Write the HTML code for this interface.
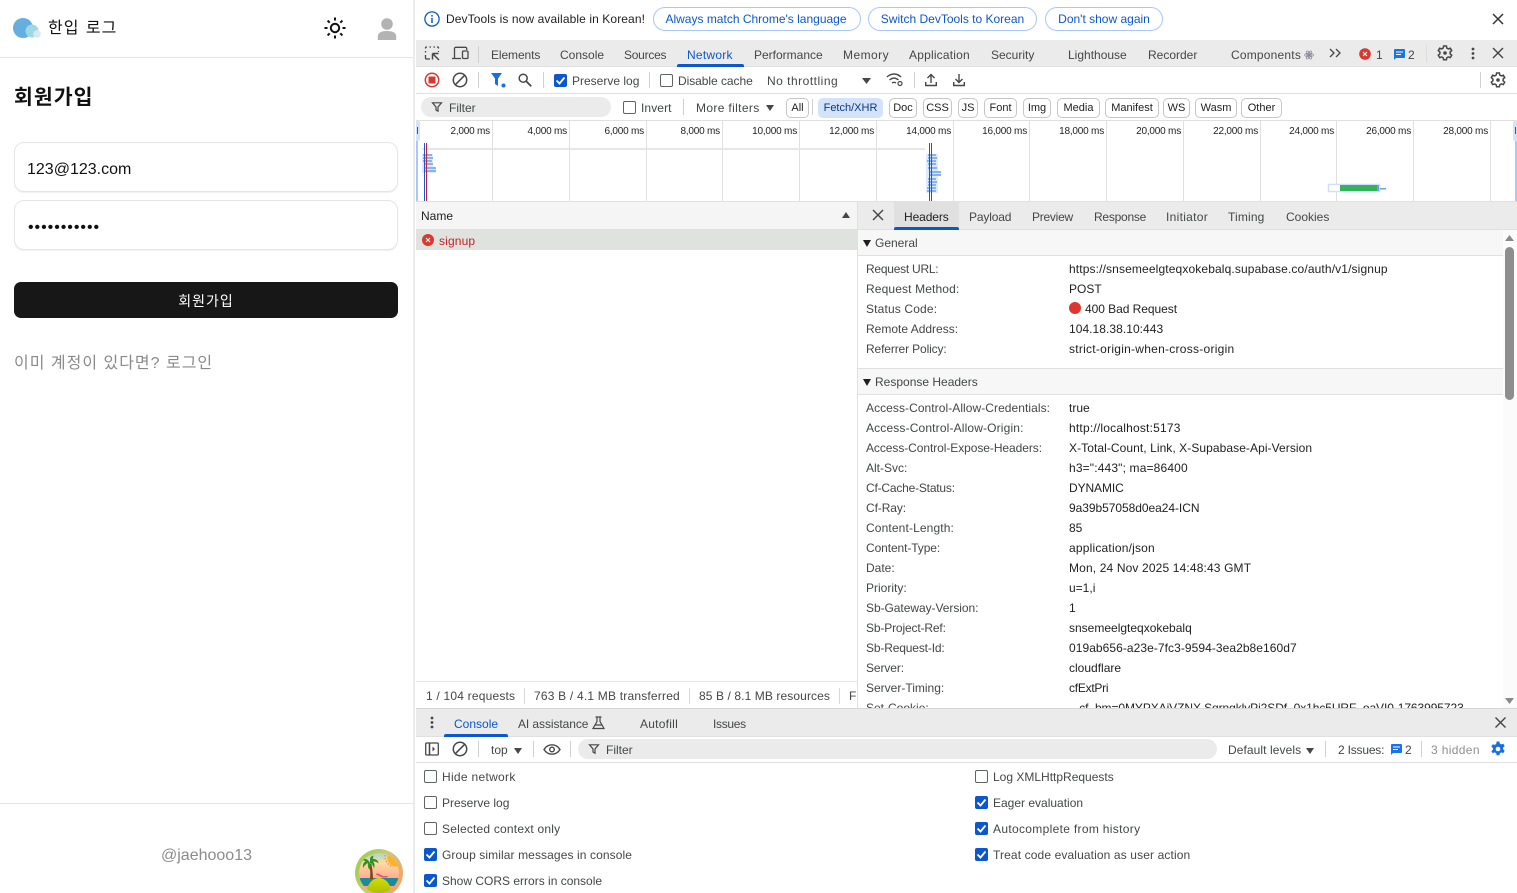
<!DOCTYPE html>
<html lang="ko"><head><meta charset="utf-8"><title>회원가입</title>
<style>
html,body{margin:0;padding:0;background:#fff}
#r{position:relative;width:1517px;height:893px;overflow:hidden;background:#fff;font:12px/16px "Liberation Sans","Noto Sans CJK KR",sans-serif;color:#444746}
.t{position:absolute;white-space:nowrap;line-height:16px}
.b{position:absolute}
.k{position:absolute;white-space:nowrap;font-family:"Liberation Sans","Noto Sans CJK KR",sans-serif}
.c{color:#1f1f1f}
.chip{position:absolute;top:98px;height:18px;border:1px solid #c4c7c5;border-radius:5px;text-align:center;line-height:18px;font-size:11px;color:#1f1f1f;box-sizing:content-box}
.cb{position:absolute;width:11px;height:11px;border:1px solid #5f6368;border-radius:2px;background:#fff}
.cb.on{width:13px;height:13px;border:0;background:#0b57d0}
.cb svg{display:block}
.lbl{font-size:12px;color:#1f1f1f}
svg{position:absolute;overflow:visible}
.cb svg{position:static}
.g{position:absolute;top:121px;width:1px;height:80px;background:#e0e0e0}
.ms{position:absolute;top:125px;font-size:10px;line-height:14px;color:#1f1f1f;text-align:right;width:70px;white-space:nowrap;letter-spacing:-.2px}
</style></head><body><div id="r">

<!-- LEFT APP -->
<div class="b" style="left:0;top:0;width:415px;height:893px;background:#fff"></div>
<div class="b" style="left:413px;top:0;width:2px;height:893px;background:#ececec"></div>
<div class="b" style="left:0;top:57px;width:413px;height:1px;background:#e5e5e5"></div>
<svg style="left:12px;top:17px" width="30" height="22" viewBox="0 0 30 22"><circle cx="11" cy="11" r="10" fill="#64aee0"/><circle cx="20" cy="14" r="6.500" fill="#9dd8e3"/><circle cx="25" cy="17" r="3.800" fill="#d9e9ee"/></svg>
<div class="k" style="left:48px;top:18px;font-size:16px;line-height:21px;color:#111;letter-spacing:1px;word-spacing:1px">한입 로그</div>
<svg style="left:323px;top:16px" width="24" height="24" viewBox="0 0 24 24" fill="none" stroke="#111" stroke-width="2"><circle cx="12" cy="12" r="4.200"/><path d="M12 1.500v3M12 19.500v3M1.500 12h3M19.500 12h3M4.600 4.600l2.100 2.100M17.300 17.300l2.100 2.100M4.600 19.400l2.100-2.100M17.300 6.700l2.100-2.100"/></svg>
<svg style="left:377px;top:18px" width="20" height="23" viewBox="0 0 20 23"><circle cx="10" cy="6" r="5.800" fill="#b3b3b3"/><path d="M.8 22v-3.500C.8 14.800 4 13 10 13s9.200 1.800 9.200 5.500V22z" fill="#b3b3b3"/></svg>
<div class="k" style="left:14px;top:84px;font-size:20.5px;font-weight:700;line-height:27px;color:#111;letter-spacing:1px">회원가입</div>
<div class="b" style="left:14px;top:142px;width:382px;height:48px;border:1px solid #e5e5e5;border-radius:10px;box-shadow:0 1px 1px #f0f0f0"></div>
<div class="k" style="left:27px;top:159px;font-size:16px;line-height:21px;color:#111">123@123.com</div>
<div class="b" style="left:14px;top:200px;width:382px;height:48px;border:1px solid #e5e5e5;border-radius:10px;box-shadow:0 1px 1px #f0f0f0"></div>
<div class="k" style="left:28px;top:217px;font-size:16px;line-height:21px;color:#111;letter-spacing:.95px">•••••••••••</div>
<div class="b" style="left:14px;top:282px;width:384px;height:36px;background:#171717;border-radius:7px"></div>
<div class="k" style="left:14px;top:291px;width:384px;text-align:center;font-size:14px;line-height:20px;color:#fff;letter-spacing:1px">회원가입</div>
<div class="k" style="left:14px;top:353px;font-size:16px;line-height:22px;color:#8a8a8a;letter-spacing:1px">이미 계정이 있다면? 로그인</div>
<div class="b" style="left:0;top:803px;width:413px;height:1px;background:#e5e5e5"></div>
<div class="k" style="left:0;top:845px;width:413px;text-align:center;font-size:16px;line-height:22px;color:#8c8c8c">@jaehooo13</div>
<svg style="left:355px;top:849px" width="48" height="48" viewBox="0 0 48 48"><defs><linearGradient id="sky" x1="0" y1="0" x2="0" y2="1"><stop offset="0" stop-color="#7fd4dc"/><stop offset=".28" stop-color="#ffdca0"/><stop offset=".7" stop-color="#ff9e90"/></linearGradient><linearGradient id="rim" x1="0" y1="0" x2="1" y2=".6"><stop offset="0" stop-color="#8fd050"/><stop offset=".55" stop-color="#cfc870"/><stop offset="1" stop-color="#f4a468"/></linearGradient><linearGradient id="isl" x1="0" y1="0" x2="0" y2="1"><stop offset="0" stop-color="#d8dc00"/><stop offset="1" stop-color="#6c9a00"/></linearGradient><clipPath id="ac"><circle cx="24" cy="24" r="20"/></clipPath></defs><circle cx="24" cy="24" r="24" fill="url(#rim)"/><g clip-path="url(#ac)"><rect x="0" y="0" width="48" height="48" fill="url(#sky)"/><circle cx="41" cy="9" r="8.500" fill="#ffb020"/><path d="M30 6a12 12 0 0 0 8 12" fill="none" stroke="#e89a60" stroke-width="1.500" stroke-dasharray="1.500 1.500"/><rect x="0" y="29" width="48" height="8" fill="#1d8a9c"/><ellipse cx="24" cy="46" rx="13" ry="17" fill="url(#isl)"/></g><path d="M22 24l6 3h5l-1 1.500h-5l-6-3z" fill="#e8507a"/><path d="M15 30c.5-5 .3-10-.8-15l2.200 0c1 5 1.600 10 1.600 15z" fill="#7a4a1c"/><path d="M15 14c-2-4-5-5-7-3 1 .3 2 1 2.500 1.500C8.500 13 7.500 15.500 8 19c1.500-2.500 3-4 5-5-.5 2.500 0 5 1.500 7 .5-2.500 1-5 1-7 1.500 1 3 3 3.500 5.500 1-3 .5-5.500-1-7 2-.2 4 .5 5.500 2 0-3-3-5-6-4.500 1-1 1-2.500.5-3.500-1.500.5-3 2-3 3.500z" fill="#2a9426"/></svg>

<!-- DEVTOOLS INFOBAR -->
<div class="b" style="left:416px;top:0;width:1101px;height:893px;background:#fff"></div>
<svg style="left:424px;top:11px" width="16" height="16" viewBox="0 0 16 16" fill="none" stroke="#0b57d0"><circle cx="8" cy="8" r="7.100" stroke-width="1.300"/><path d="M8 7v5M8 4v1.600" stroke-width="1.500"/></svg>
<div class="t c" style="left:446px;top:11px;letter-spacing:.1px">DevTools is now available in Korean!</div>
<div class="b" style="left:653px;top:7px;width:206px;height:22px;border:1px solid #a8c7fa;border-radius:12px"></div>
<div class="t" style="left:652px;top:11px;width:208px;text-align:center;color:#0b57d0;font-size:12px">Always match Chrome's language</div>
<div class="b" style="left:868px;top:7px;width:167px;height:22px;border:1px solid #a8c7fa;border-radius:12px"></div>
<div class="t" style="left:868px;top:11px;width:169px;text-align:center;color:#0b57d0">Switch DevTools to Korean</div>
<div class="b" style="left:1045px;top:7px;width:116px;height:22px;border:1px solid #a8c7fa;border-radius:12px"></div>
<div class="t" style="left:1045px;top:11px;width:118px;text-align:center;color:#0b57d0">Don't show again</div>
<svg style="left:1492px;top:13px" width="12" height="12" viewBox="0 0 12 12" stroke="#333" stroke-width="1.500"><path d="M1 1l10 10M11 1L1 11"/></svg>

<!-- MAIN TAB BAR -->
<div class="b" style="left:416px;top:40px;width:1101px;height:26px;background:#ebebeb"></div>
<div class="b" style="left:416px;top:66px;width:1101px;height:1px;background:#e0e0e0"></div>
<svg style="left:424px;top:45px" width="17" height="17" viewBox="0 0 17 17" fill="none" stroke="#474747" stroke-width="1.300"><path d="M6 14H2.500a1 1 0 0 1-1-1V10M1.500 7.500V6M1.500 3.500V3a1 1 0 0 1 1-1H3M5.500 2H7M9.500 2H11M13 2h.5a1 1 0 0 1 1 1v.5M14.500 6v1"/><path d="M8.500 8.500h6M8.500 8.500v6M8.500 8.500l6.500 6.500" stroke-width="1.500"/></svg>
<svg style="left:452px;top:46px" width="17" height="15" viewBox="0 0 17 15" fill="none" stroke="#474747" stroke-width="1.300"><path d="M0 12.500h9M2.500 12V2.500a1.200 1.200 0 0 1 1.200-1.200H13.500a1.200 1.200 0 0 1 1.200 1.200V4"/><rect x="10.500" y="5" width="5.500" height="7.500" rx="1"/></svg>
<div class="b" style="left:478px;top:46px;width:1px;height:17px;background:#d0d0d0"></div>
<div class="t" style="left:491px;top:47px;letter-spacing:-.1px">Elements</div>
<div class="t" style="left:560px;top:47px">Console</div>
<div class="t" style="left:624px;top:47px;letter-spacing:-.25px">Sources</div>
<div class="t" style="left:687px;top:47px;color:#0b57d0;letter-spacing:.25px">Network</div>
<div class="b" style="left:677px;top:64px;width:67px;height:3px;background:#0b57d0;border-radius:2px 2px 0 0"></div>
<div class="t" style="left:754px;top:47px">Performance</div>
<div class="t" style="left:843px;top:47px;letter-spacing:.45px">Memory</div>
<div class="t" style="left:909px;top:47px;letter-spacing:.2px">Application</div>
<div class="t" style="left:991px;top:47px">Security</div>
<div class="t" style="left:1068px;top:47px">Lighthouse</div>
<div class="t" style="left:1148px;top:47px">Recorder</div>
<div class="t" style="left:1231px;top:47px;letter-spacing:.2px">Components</div>
<svg style="left:1304px;top:50px" width="10" height="10" viewBox="0 0 10 10" fill="none" stroke="#8f8fa0" stroke-width=".8"><ellipse cx="5" cy="5" rx="4.500" ry="1.800"/><ellipse cx="5" cy="5" rx="4.500" ry="1.800" transform="rotate(60 5 5)"/><ellipse cx="5" cy="5" rx="4.500" ry="1.800" transform="rotate(120 5 5)"/><circle cx="5" cy="5" r="1" fill="#777"/></svg>
<svg style="left:1329px;top:48px" width="13" height="10" viewBox="0 0 13 10" fill="none" stroke="#474747" stroke-width="1.300"><path d="M1 1l4 4-4 4M7 1l4 4-4 4"/></svg>
<svg style="left:1359px;top:48px" width="12" height="12" viewBox="0 0 12 12"><circle cx="6" cy="6" r="5.800" fill="#dc362e"/><path d="M4 4l4 4M8 4L4 8" stroke="#fff" stroke-width="1.100"/></svg>
<div class="t" style="left:1376px;top:47px">1</div>
<svg style="left:1394px;top:49px" width="11" height="11" viewBox="0 0 11 11"><path d="M0 1a1 1 0 0 1 1-1h9a1 1 0 0 1 1 1v7a1 1 0 0 1-1 1H2L0 11z" fill="#1a73e8"/><path d="M2 3h7M2 5.500h5" stroke="#fff"/></svg>
<div class="t" style="left:1408px;top:47px">2</div>
<div class="b" style="left:1426px;top:45px;width:1px;height:17px;background:#dcdcdc"></div>
<svg id="gear1" style="left:1437px;top:45px" width="16" height="16" viewBox="0 0 16 16" fill="none" stroke="#474747" stroke-width="1.500"><path d="M6.600 1h2.800l.4 2 1.500.9 2-.7 1.400 2.400-1.600 1.400v1.800l1.600 1.400-1.400 2.400-2-.7-1.500.9-.4 2H6.600l-.4-2-1.500-.9-2 .7L1.300 10.200 2.900 8.800V7L1.300 5.600l1.400-2.400 2 .7 1.500-.9z"/><circle cx="8" cy="8" r="1.800" fill="#474747" stroke="none"/></svg>
<svg style="left:1471px;top:47px" width="4" height="13" viewBox="0 0 4 13" fill="#474747"><circle cx="2" cy="2" r="1.400"/><circle cx="2" cy="6.500" r="1.400"/><circle cx="2" cy="11" r="1.400"/></svg>
<svg style="left:1493px;top:48px" width="10" height="10" viewBox="0 0 10 10" stroke="#444" stroke-width="1.400"><path d="M0 0l10 10M10 0L0 10"/></svg>

<!-- TOOLBAR -->
<div class="b" style="left:416px;top:93px;width:1101px;height:1px;background:#e0e0e0"></div>
<svg style="left:424px;top:72px" width="16" height="16" viewBox="0 0 16 16"><circle cx="8" cy="8" r="6.700" fill="none" stroke="#dc362e" stroke-width="1.500"/><rect x="4.500" y="4.500" width="7" height="7" rx="1" fill="#dc362e"/></svg>
<svg style="left:452px;top:72px" width="16" height="16" viewBox="0 0 16 16" fill="none" stroke="#474747" stroke-width="1.500"><circle cx="8" cy="8" r="6.700"/><path d="M3.300 12.700l9.400-9.400"/></svg>
<div class="b" style="left:478px;top:72px;width:1px;height:16px;background:#d0d0d0"></div>
<svg style="left:491px;top:73px" width="16" height="15" viewBox="0 0 16 15"><path d="M0 0h11L7 5.500V13L4 11V5.500z" fill="#1a6fe0"/><circle cx="12.500" cy="12.500" r="2" fill="#1a6fe0"/></svg>
<svg style="left:518px;top:73px" width="14" height="14" viewBox="0 0 14 14" fill="none" stroke="#474747" stroke-width="1.500"><circle cx="5.200" cy="5.200" r="4"/><path d="M8.200 8.200l5 5" stroke-width="1.800"/></svg>
<div class="b" style="left:543px;top:72px;width:1px;height:16px;background:#d0d0d0"></div>
<div class="cb on" style="left:554px;top:74px"><svg width="13" height="13" viewBox="0 0 13 13" fill="none" stroke="#fff" stroke-width="1.800"><path d="M2.500 6.500l3 3 5-6"/></svg></div>
<div class="t" style="left:572px;top:73px">Preserve log</div>
<div class="b" style="left:649px;top:72px;width:1px;height:16px;background:#d0d0d0"></div>
<div class="cb" style="left:660px;top:74px"></div>
<div class="t" style="left:678px;top:73px;letter-spacing:-.05px">Disable cache</div>
<div class="t" style="left:767px;top:73px;letter-spacing:.5px">No throttling</div>
<svg style="left:862px;top:78px" width="9" height="6" viewBox="0 0 9 6" fill="#474747"><path d="M0 0h9L4.500 6z"/></svg>
<svg style="left:886px;top:73px" width="18" height="14" viewBox="0 0 18 14" fill="none" stroke="#474747" stroke-width="1.400"><path d="M1 4c4-4 10-4 14 0M3.500 7c3-2.600 6-2.600 9 0M6 10c1.500-1 2.500-1 4 0"/><circle cx="14" cy="10.500" r="2" stroke-width="1.200"/></svg>
<div class="b" style="left:914px;top:72px;width:1px;height:16px;background:#d0d0d0"></div>
<svg style="left:925px;top:73px" width="12" height="14" viewBox="0 0 12 14" fill="none" stroke="#474747" stroke-width="1.400"><path d="M6 10V1.500M2.500 5L6 1.500 9.500 5M.7 9v3.500h10.600V9"/></svg>
<svg style="left:953px;top:73px" width="12" height="14" viewBox="0 0 12 14" fill="none" stroke="#474747" stroke-width="1.400"><path d="M6 1v8.500M2.500 6L6 9.500 9.500 6M.7 9v3.500h10.600V9"/></svg>
<div class="b" style="left:1480px;top:72px;width:1px;height:16px;background:#d0d0d0"></div>
<svg style="left:1490px;top:72px" width="16" height="16" viewBox="0 0 16 16" fill="none" stroke="#474747" stroke-width="1.500"><path d="M6.600 1h2.800l.4 2 1.500.9 2-.7 1.400 2.400-1.600 1.400v1.800l1.600 1.400-1.400 2.400-2-.7-1.500.9-.4 2H6.600l-.4-2-1.500-.9-2 .7L1.300 10.200 2.900 8.800V7L1.300 5.600l1.400-2.400 2 .7 1.500-.9z"/><circle cx="8" cy="8" r="1.800" fill="#474747" stroke="none"/></svg>

<!-- FILTER BAR -->
<div class="b" style="left:416px;top:120px;width:1101px;height:1px;background:#e0e0e0"></div>
<div class="b" style="left:421px;top:97px;width:190px;height:20px;background:#ebebeb;border-radius:10px"></div>
<svg style="left:432px;top:102px" width="10" height="10" viewBox="0 0 10 10" fill="none" stroke="#474747" stroke-width="1.200"><path d="M.5.800h9L6 5v4.200L4 8V5z"/></svg>
<div class="t" style="left:449px;top:100px">Filter</div>
<div class="cb" style="left:623px;top:101px"></div>
<div class="t" style="left:641px;top:100px;letter-spacing:.1px">Invert</div>
<div class="b" style="left:683px;top:99px;width:1px;height:16px;background:#d0d0d0"></div>
<div class="t" style="left:696px;top:100px;letter-spacing:.35px">More filters</div>
<svg style="left:766px;top:105px" width="8" height="6" viewBox="0 0 8 6" fill="#474747"><path d="M0 0h8L4 6z"/></svg>
<div class="chip" style="left:786px;width:21px">All</div>
<div class="b" style="left:812px;top:99px;width:1px;height:16px;background:#d0d0d0"></div>
<div class="chip" style="left:818px;width:63px;background:#d3e3fd;border-color:#d3e3fd;color:#0a3a7a">Fetch/XHR</div>
<div class="chip" style="left:889px;width:26px">Doc</div>
<div class="chip" style="left:923px;width:27px">CSS</div>
<div class="chip" style="left:958px;width:18px">JS</div>
<div class="chip" style="left:984px;width:31px">Font</div>
<div class="chip" style="left:1023px;width:26px">Img</div>
<div class="chip" style="left:1057px;width:41px">Media</div>
<div class="chip" style="left:1105px;width:52px">Manifest</div>
<div class="chip" style="left:1163px;width:25px">WS</div>
<div class="chip" style="left:1195px;width:40px">Wasm</div>
<div class="chip" style="left:1241px;width:39px">Other</div>

<!-- OVERVIEW -->
<div class="g" style="left:492px"></div><div class="g" style="left:569px"></div><div class="g" style="left:646px"></div><div class="g" style="left:722px"></div><div class="g" style="left:799px"></div><div class="g" style="left:876px"></div><div class="g" style="left:953px"></div><div class="g" style="left:1029px"></div><div class="g" style="left:1106px"></div><div class="g" style="left:1183px"></div><div class="g" style="left:1260px"></div><div class="g" style="left:1336px"></div><div class="g" style="left:1413px"></div><div class="g" style="left:1490px"></div>
<div class="ms" style="left:420px">2,000 ms</div><div class="ms" style="left:497px">4,000 ms</div><div class="ms" style="left:574px">6,000 ms</div><div class="ms" style="left:650px">8,000 ms</div><div class="ms" style="left:727px">10,000 ms</div><div class="ms" style="left:804px">12,000 ms</div><div class="ms" style="left:881px">14,000 ms</div><div class="ms" style="left:957px">16,000 ms</div><div class="ms" style="left:1034px">18,000 ms</div><div class="ms" style="left:1111px">20,000 ms</div><div class="ms" style="left:1188px">22,000 ms</div><div class="ms" style="left:1264px">24,000 ms</div><div class="ms" style="left:1341px">26,000 ms</div><div class="ms" style="left:1418px">28,000 ms</div>
<div class="b" style="left:422px;top:148px;width:503px;height:2px;background:#e6e6e6"></div>
<svg style="left:416px;top:121px" width="1101" height="80" viewBox="0 0 1101 80">
<rect x="6" y="33" width="11" height="19" fill="#dfeafc"/><rect x="14" y="46" width="6" height="6" fill="#dfeafc"/>
<g fill="#86b3f3"><rect x="7" y="33" width="9" height="2"/><rect x="7" y="36" width="10" height="2"/><rect x="7" y="39" width="9" height="2"/><rect x="8" y="42" width="9" height="2"/><rect x="8" y="46" width="12" height="2"/><rect x="8" y="49" width="12" height="2"/></g>
<rect x="510" y="33" width="12" height="39" fill="#dfeafc"/><rect x="516" y="50" width="9" height="5" fill="#dfeafc"/>
<g fill="#86b3f3"><rect x="512" y="33" width="8" height="2"/><rect x="512" y="36" width="9" height="2"/><rect x="511" y="39" width="9" height="2"/><rect x="512" y="42" width="8" height="2"/><rect x="512" y="46" width="9" height="2"/><rect x="514" y="50" width="11" height="2"/><rect x="514" y="53" width="11" height="2"/><rect x="512" y="57" width="8" height="2"/><rect x="512" y="60" width="9" height="2"/><rect x="512" y="63" width="8" height="2"/><rect x="511" y="66" width="9" height="2"/><rect x="511" y="69" width="9" height="2"/></g>
<rect x="8" y="22" width="1" height="58" fill="#1a56d6"/><rect x="10" y="22" width="1" height="58" fill="#c5221f"/>
<rect x="513" y="22" width="1" height="58" fill="#1a56d6"/><rect x="515" y="22" width="1" height="58" fill="#c5221f"/>
<rect x="912.500" y="63.500" width="51" height="7" fill="#fff" stroke="#cfe0fa" stroke-width="1.500"/><rect x="924" y="64" width="37" height="6" fill="#34b35c"/><rect x="961" y="64" width="2" height="6" fill="#6da0e8"/><rect x="964" y="67" width="6" height="1.500" fill="#6da0e8"/>
</svg>
<div class="b" style="left:416px;top:121px;width:2px;height:80px;background:#a8c7fa"></div>
<div class="b" style="left:416px;top:121px;width:4px;height:20px;background:#d3e3fd;border:0;border-radius:0 2px 2px 0"></div>
<div class="b" style="left:417px;top:127px;width:1px;height:7px;background:#1a56d6"></div>
<div class="b" style="left:1515px;top:121px;width:2px;height:80px;background:#a8c7fa"></div>
<div class="b" style="left:1513px;top:121px;width:4px;height:20px;background:#d3e3fd;border-radius:2px 0 0 2px"></div>
<div class="b" style="left:1515px;top:127px;width:1px;height:7px;background:#1a56d6"></div>
<div class="b" style="left:416px;top:201px;width:1101px;height:1px;background:#e0e0e0"></div>

<!-- NAME PANE -->
<div class="b" style="left:416px;top:202px;width:441px;height:27px;background:#f5f5f5"></div>
<div class="t c" style="left:421px;top:208px">Name</div>
<svg style="left:842px;top:212px" width="8" height="6" viewBox="0 0 8 6" fill="#474747"><path d="M4 0l4 6H0z"/></svg>
<div class="b" style="left:416px;top:229px;width:441px;height:21px;background:#e0e2e0"></div>
<svg style="left:422px;top:234px" width="12" height="12" viewBox="0 0 12 12"><circle cx="6" cy="6" r="6" fill="#dc362e"/><path d="M4 4l4 4M8 4L4 8" stroke="#fff" stroke-width="1.100"/></svg>
<div class="t" style="left:439px;top:233px;color:#c5221f;letter-spacing:.15px">signup</div>
<div class="b" style="left:857px;top:202px;width:1px;height:507px;background:#e0e0e0"></div>
<div class="t" style="left:426px;top:688px;letter-spacing:.2px">1 / 104 requests</div>
<div class="b" style="left:524px;top:688px;width:1px;height:16px;background:#d8d8d8"></div>
<div class="t" style="left:534px;top:688px;letter-spacing:.2px">763 B / 4.1 MB transferred</div>
<div class="b" style="left:689px;top:688px;width:1px;height:16px;background:#d8d8d8"></div>
<div class="t" style="left:699px;top:688px;letter-spacing:.1px">85 B / 8.1 MB resources</div>
<div class="b" style="left:839px;top:688px;width:1px;height:16px;background:#d8d8d8"></div>
<div class="t" style="left:849px;top:688px">F</div>
<div class="b" style="left:416px;top:681px;width:441px;height:1px;background:#e8e8e8"></div>

<!-- HEADERS PANE -->
<div class="b" style="left:858px;top:202px;width:659px;height:27px;background:#ebebeb"></div>
<div class="b" style="left:858px;top:229px;width:659px;height:1px;background:#e0e0e0"></div>
<svg style="left:873px;top:210px" width="10" height="10" viewBox="0 0 10 10" stroke="#444" stroke-width="1.400"><path d="M0 0l10 10M10 0L0 10"/></svg>
<div class="b" style="left:894px;top:202px;width:65px;height:27px;background:#e0e0e0"></div>
<div class="b" style="left:894px;top:227px;width:65px;height:3px;background:#0b57d0;border-radius:2px 2px 0 0"></div>
<div class="t c" style="left:904px;top:209px;letter-spacing:-.1px">Headers</div>
<div class="t" style="left:969px;top:209px;letter-spacing:-.15px">Payload</div>
<div class="t" style="left:1032px;top:209px;letter-spacing:-.25px">Preview</div>
<div class="t" style="left:1094px;top:209px;letter-spacing:-.25px">Response</div>
<div class="t" style="left:1166px;top:209px;letter-spacing:.3px">Initiator</div>
<div class="t" style="left:1228px;top:209px;letter-spacing:.15px">Timing</div>
<div class="t" style="left:1286px;top:209px">Cookies</div>

<div class="b" style="left:858px;top:230px;width:645px;height:25px;background:#f7f7f7;border-bottom:1px solid #e0e0e0"></div>
<svg style="left:863px;top:240px" width="8" height="7" viewBox="0 0 8 7" fill="#1f1f1f"><path d="M0 0h8L4 7z"/></svg>
<div class="t" style="left:875px;top:235px">General</div>
<div class="b" style="left:858px;top:368px;width:645px;height:25px;background:#f7f7f7;border-top:1px solid #e0e0e0;border-bottom:1px solid #e0e0e0"></div>
<svg style="left:863px;top:379px" width="8" height="7" viewBox="0 0 8 7" fill="#1f1f1f"><path d="M0 0h8L4 7z"/></svg>
<div class="t" style="left:875px;top:374px">Response Headers</div>

<div class="t" style="left:866px;top:261px;letter-spacing:-.25px">Request URL:</div><div class="t c" style="left:1069px;top:261px;letter-spacing:.13px">https://snsemeelgteqxokebalq.supabase.co/auth/v1/signup</div>
<div class="t" style="left:866px;top:281px;letter-spacing:.13px">Request Method:</div><div class="t c" style="left:1069px;top:281px">POST</div>
<div class="t" style="left:866px;top:301px;letter-spacing:.15px">Status Code:</div><div class="b" style="left:1069px;top:302px;width:12px;height:12px;border-radius:50%;background:#dc362e"></div><div class="t c" style="left:1085px;top:301px;letter-spacing:-.05px">400 Bad Request</div>
<div class="t" style="left:866px;top:321px">Remote Address:</div><div class="t c" style="left:1069px;top:321px;letter-spacing:.05px">104.18.38.10:443</div>
<div class="t" style="left:866px;top:341px;letter-spacing:-.13px">Referrer Policy:</div><div class="t c" style="left:1069px;top:341px;letter-spacing:.26px">strict-origin-when-cross-origin</div>

<div class="t" style="left:866px;top:400px;letter-spacing:.06px">Access-Control-Allow-Credentials:</div><div class="t c" style="left:1069px;top:400px">true</div>
<div class="t" style="left:866px;top:420px;letter-spacing:.15px">Access-Control-Allow-Origin:</div><div class="t c" style="left:1069px;top:420px;letter-spacing:.2px">http://localhost:5173</div>
<div class="t" style="left:866px;top:440px;letter-spacing:-.07px">Access-Control-Expose-Headers:</div><div class="t c" style="left:1069px;top:440px;letter-spacing:.07px">X-Total-Count, Link, X-Supabase-Api-Version</div>
<div class="t" style="left:866px;top:460px">Alt-Svc:</div><div class="t c" style="left:1069px;top:460px;letter-spacing:.15px">h3=":443"; ma=86400</div>
<div class="t" style="left:866px;top:480px;letter-spacing:-.2px">Cf-Cache-Status:</div><div class="t c" style="left:1069px;top:480px;letter-spacing:-.1px">DYNAMIC</div>
<div class="t" style="left:866px;top:500px;letter-spacing:-.1px">Cf-Ray:</div><div class="t c" style="left:1069px;top:500px;letter-spacing:-.05px">9a39b57058d0ea24-ICN</div>
<div class="t" style="left:866px;top:520px;letter-spacing:.13px">Content-Length:</div><div class="t c" style="left:1069px;top:520px">85</div>
<div class="t" style="left:866px;top:540px;letter-spacing:-.1px">Content-Type:</div><div class="t c" style="left:1069px;top:540px;letter-spacing:.2px">application/json</div>
<div class="t" style="left:866px;top:560px">Date:</div><div class="t c" style="left:1069px;top:560px;letter-spacing:.14px">Mon, 24 Nov 2025 14:48:43 GMT</div>
<div class="t" style="left:866px;top:580px">Priority:</div><div class="t c" style="left:1069px;top:580px">u=1,i</div>
<div class="t" style="left:866px;top:600px;letter-spacing:-.05px">Sb-Gateway-Version:</div><div class="t c" style="left:1069px;top:600px">1</div>
<div class="t" style="left:866px;top:620px;letter-spacing:-.15px">Sb-Project-Ref:</div><div class="t c" style="left:1069px;top:620px">snsemeelgteqxokebalq</div>
<div class="t" style="left:866px;top:640px;letter-spacing:-.15px">Sb-Request-Id:</div><div class="t c" style="left:1069px;top:640px;letter-spacing:.06px">019ab656-a23e-7fc3-9594-3ea2b8e160d7</div>
<div class="t" style="left:866px;top:660px;letter-spacing:-.1px">Server:</div><div class="t c" style="left:1069px;top:660px">cloudflare</div>
<div class="t" style="left:866px;top:680px">Server-Timing:</div><div class="t c" style="left:1069px;top:680px;letter-spacing:-.25px">cfExtPri</div>
<div class="b" style="left:858px;top:698px;width:645px;height:10px;overflow:hidden"><div class="t" style="left:8px;top:2px">Set-Cookie:</div><div class="t c" style="left:208px;top:2px;letter-spacing:-.08px">__cf_bm=0MYPXAjVZNX.SqrngklyPj2SDf_0x1hc5URF_oaVI0-1763995723</div></div>
<div class="b" style="left:1503px;top:230px;width:14px;height:479px;background:#fbfbfb"></div>
<svg style="left:1505px;top:235px" width="9" height="6" viewBox="0 0 9 6" fill="#8a8a8a"><path d="M4.500 0L9 6H0z"/></svg>
<div class="b" style="left:1505px;top:247px;width:9px;height:153px;background:#8e8e8e;border-radius:5px"></div>
<svg style="left:1505px;top:698px" width="9" height="6" viewBox="0 0 9 6" fill="#8a8a8a"><path d="M0 0h9L4.500 6z"/></svg>

<!-- DRAWER -->
<div class="b" style="left:416px;top:708px;width:1101px;height:1px;background:#d6d6d6"></div>
<div class="b" style="left:416px;top:709px;width:1101px;height:27px;background:#ebebeb"></div>
<div class="b" style="left:416px;top:736px;width:1101px;height:1px;background:#e0e0e0"></div>
<svg style="left:430px;top:716px" width="4" height="13" viewBox="0 0 4 13" fill="#474747"><circle cx="2" cy="2" r="1.400"/><circle cx="2" cy="6.500" r="1.400"/><circle cx="2" cy="11" r="1.400"/></svg>
<div class="t" style="left:454px;top:716px;color:#0b57d0">Console</div>
<div class="b" style="left:444px;top:734px;width:64px;height:3px;background:#0b57d0;border-radius:2px 2px 0 0"></div>
<div class="t" style="left:518px;top:716px;letter-spacing:-.08px">AI assistance</div>
<svg style="left:592px;top:716px" width="13" height="14" viewBox="0 0 13 14" fill="none" stroke="#474747" stroke-width="1.200"><path d="M3.500 1h6M5 1v4.500L1 12.500h11L8 5.500V1M3 9h7"/></svg>
<div class="t" style="left:640px;top:716px;letter-spacing:.25px">Autofill</div>
<div class="t" style="left:713px;top:716px;letter-spacing:-.3px">Issues</div>
<svg style="left:1495px;top:717px" width="11" height="11" viewBox="0 0 11 11" stroke="#444" stroke-width="1.400"><path d="M.5.500l10 10M10.500.500l-10 10"/></svg>

<div class="b" style="left:416px;top:762px;width:1101px;height:1px;background:#e0e0e0"></div>
<svg style="left:425px;top:742px" width="14" height="14" viewBox="0 0 14 14" fill="none" stroke="#474747" stroke-width="1.300"><rect x=".7" y="1" width="12.600" height="12" rx="1"/><path d="M4.500 1v12" stroke-width="1.500"/><path d="M7.500 4.500L10 7 7.500 9.500z" fill="#474747" stroke="none"/></svg>
<svg style="left:452px;top:741px" width="16" height="16" viewBox="0 0 16 16" fill="none" stroke="#474747" stroke-width="1.500"><circle cx="8" cy="8" r="6.700"/><path d="M3.300 12.700l9.400-9.400"/></svg>
<div class="b" style="left:478px;top:741px;width:1px;height:16px;background:#d0d0d0"></div>
<div class="t" style="left:491px;top:742px">top</div>
<svg style="left:514px;top:748px" width="8" height="6" viewBox="0 0 8 6" fill="#474747"><path d="M0 0h8L4 6z"/></svg>
<div class="b" style="left:533px;top:741px;width:1px;height:16px;background:#d0d0d0"></div>
<svg style="left:543px;top:744px" width="18" height="11" viewBox="0 0 18 11" fill="none" stroke="#474747" stroke-width="1.400"><path d="M1 5.500C3 2.300 5.800.8 9 .8s6 1.500 8 4.700c-2 3.200-4.800 4.700-8 4.700S3 8.700 1 5.500z"/><circle cx="9" cy="5.500" r="2.300"/></svg>
<div class="b" style="left:570px;top:741px;width:1px;height:16px;background:#d0d0d0"></div>
<div class="b" style="left:578px;top:739px;width:639px;height:20px;background:#ebebeb;border-radius:10px"></div>
<svg style="left:589px;top:744px" width="10" height="10" viewBox="0 0 10 10" fill="none" stroke="#474747" stroke-width="1.200"><path d="M.5.800h9L6 5v4.200L4 8V5z"/></svg>
<div class="t" style="left:606px;top:742px">Filter</div>
<div class="t" style="left:1228px;top:742px;letter-spacing:.08px">Default levels</div>
<svg style="left:1306px;top:748px" width="8" height="6" viewBox="0 0 8 6" fill="#474747"><path d="M0 0h8L4 6z"/></svg>
<div class="b" style="left:1325px;top:741px;width:1px;height:16px;background:#d0d0d0"></div>
<div class="t" style="left:1338px;top:742px;letter-spacing:-.2px">2 Issues:</div>
<svg style="left:1391px;top:744px" width="11" height="11" viewBox="0 0 11 11"><path d="M0 1a1 1 0 0 1 1-1h9a1 1 0 0 1 1 1v7a1 1 0 0 1-1 1H2L0 11z" fill="#1a73e8"/><path d="M2 3h7M2 5.500h5" stroke="#fff"/></svg>
<div class="t" style="left:1405px;top:742px">2</div>
<div class="b" style="left:1421px;top:741px;width:1px;height:16px;background:#d0d0d0"></div>
<div class="t" style="left:1431px;top:742px;color:#8f8f8f;letter-spacing:.35px">3 hidden</div>
<svg style="left:1490px;top:741px" width="16" height="16" viewBox="0 0 16 16"><path d="M6.600 .5h2.800l.4 2 1.500.9 2-.7 1.400 2.400-1.600 1.400v1.800l1.600 1.400-1.400 2.400-2-.7-1.500.9-.4 2H6.600l-.4-2-1.500-.9-2 .7L1.300 10.200 2.900 8.800V7L1.300 5.600l1.400-2.400 2 .7 1.500-.9z" fill="#1a6fe0"/><circle cx="8" cy="8" r="2.300" fill="#fff"/></svg>

<div class="cb" style="left:424px;top:770px"></div><div class="t" style="left:442px;top:769px;letter-spacing:.3px">Hide network</div>
<div class="cb" style="left:424px;top:796px"></div><div class="t" style="left:442px;top:795px">Preserve log</div>
<div class="cb" style="left:424px;top:822px"></div><div class="t" style="left:442px;top:821px;letter-spacing:.2px">Selected context only</div>
<div class="cb on" style="left:424px;top:848px"><svg width="13" height="13" viewBox="0 0 13 13" fill="none" stroke="#fff" stroke-width="1.800"><path d="M2.500 6.500l3 3 5-6"/></svg></div><div class="t" style="left:442px;top:847px;letter-spacing:.1px">Group similar messages in console</div>
<div class="cb on" style="left:424px;top:874px"><svg width="13" height="13" viewBox="0 0 13 13" fill="none" stroke="#fff" stroke-width="1.800"><path d="M2.500 6.500l3 3 5-6"/></svg></div><div class="t" style="left:442px;top:873px">Show CORS errors in console</div>

<div class="cb" style="left:975px;top:770px"></div><div class="t" style="left:993px;top:769px">Log XMLHttpRequests</div>
<div class="cb on" style="left:975px;top:796px"><svg width="13" height="13" viewBox="0 0 13 13" fill="none" stroke="#fff" stroke-width="1.800"><path d="M2.500 6.500l3 3 5-6"/></svg></div><div class="t" style="left:993px;top:795px">Eager evaluation</div>
<div class="cb on" style="left:975px;top:822px"><svg width="13" height="13" viewBox="0 0 13 13" fill="none" stroke="#fff" stroke-width="1.800"><path d="M2.500 6.500l3 3 5-6"/></svg></div><div class="t" style="left:993px;top:821px;letter-spacing:.32px">Autocomplete from history</div>
<div class="cb on" style="left:975px;top:848px"><svg width="13" height="13" viewBox="0 0 13 13" fill="none" stroke="#fff" stroke-width="1.800"><path d="M2.500 6.500l3 3 5-6"/></svg></div><div class="t" style="left:993px;top:847px;letter-spacing:.12px">Treat code evaluation as user action</div>

</div></body></html>
